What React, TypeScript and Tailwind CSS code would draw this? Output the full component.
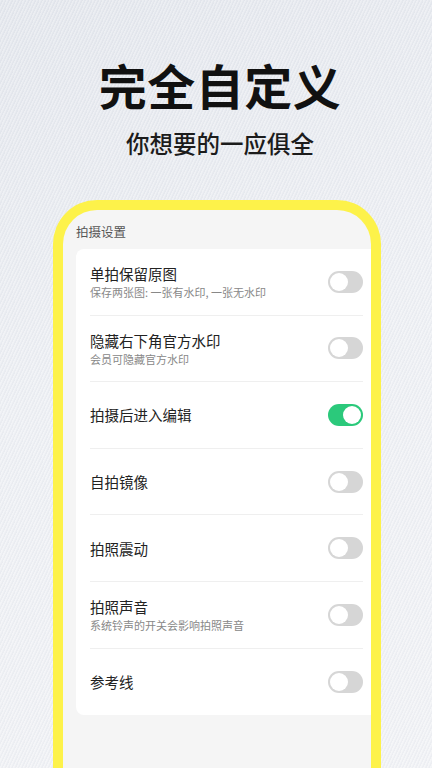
const rows = [
  { title: '单拍保留原图', sub: '保存两张图: 一张有水印, 一张无水印', on: false },
  { title: '隐藏右下角官方水印', sub: '会员可隐藏官方水印', on: false },
  { title: '拍摄后进入编辑', sub: '', on: true },
  { title: '自拍镜像', sub: '', on: false },
  { title: '拍照震动', sub: '', on: false },
  { title: '拍照声音', sub: '系统铃声的开关会影响拍照声音', on: false },
  { title: '参考线', sub: '', on: false },
]

function Toggle({ on }: { on: boolean }) {
  return (
    <div
      className={`flex h-[22px] w-[35px] shrink-0 items-center rounded-full px-[2px] ${
        on ? 'justify-end bg-[#2bc97b]' : 'justify-start bg-[#d6d6d6]'
      }`}
    >
      <div className="h-[18px] w-[18px] rounded-full bg-white" />
    </div>
  )
}

export default function App() {
  return (
    <div className="h-[768px] w-[432px] overflow-hidden bg-[linear-gradient(160deg,#e4e7ed_0%,#eef0f4_45%,#f2f3f6_100%)]">
      <div
        className="flex h-full w-full flex-col items-center bg-[repeating-linear-gradient(115deg,rgba(255,255,255,0.25)_0px,rgba(255,255,255,0.25)_1px,rgba(200,206,218,0.12)_2px,rgba(200,206,218,0.12)_3px)]"
        style={{ fontFamily: '"Noto Sans CJK SC", "Noto Sans", sans-serif' }}
      >
        <h1 className="mt-[55px] ml-[8px] text-[48px] font-bold leading-[58px] tracking-[0.5px] text-[#111]">完全自定义</h1>
        <p className="mt-[15px] ml-[8px] text-[23.5px] font-medium leading-[30px] text-[#1c1c1c]">你想要的一应俱全</p>

        <div className="mt-[42px] ml-[2px] flex w-[328px] flex-1 flex-col rounded-t-[44px] border-x-[10px] border-t-[10px] border-[#fdf24a] bg-[#f5f5f5] pl-[13px]">
          <div className="pt-[14px] text-[12.5px] leading-[16px] text-[#555]">拍摄设置</div>
          <div className="mt-[9px] rounded-l-[8px] bg-white pl-[14px] pr-[8px]">
            {rows.map((r, i) => (
              <div
                key={r.title}
                className={`flex h-[66.6px] items-center justify-between ${
                  i < rows.length - 1 ? 'border-b border-[#efefef]' : ''
                }`}
              >
                <div className="flex flex-col">
                  <span className="text-[14.5px] leading-[19px] text-[#222]">{r.title}</span>
                  {r.sub && <span className="mt-[2px] text-[11px] leading-[14px] text-[#888]">{r.sub}</span>}
                </div>
                <Toggle on={r.on} />
              </div>
            ))}
          </div>
        </div>
      </div>
    </div>
  )
}
